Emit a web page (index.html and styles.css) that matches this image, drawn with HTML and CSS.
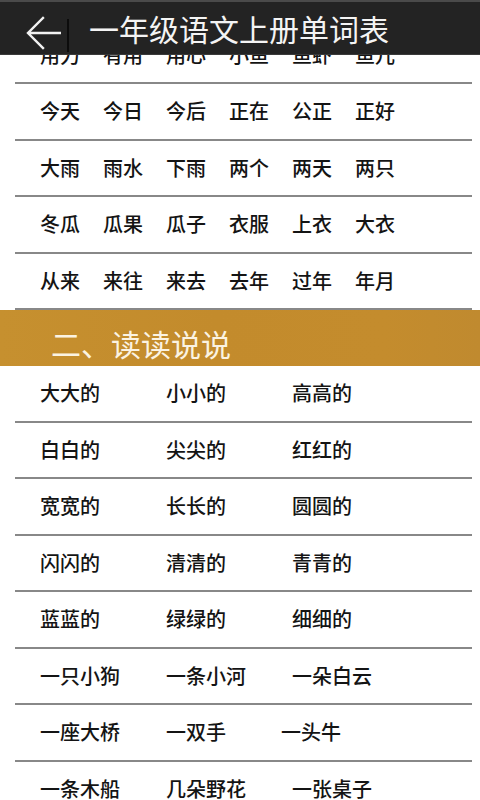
FILE: index.html
```html
<!DOCTYPE html>
<html lang="zh-CN">
<head>
<meta charset="utf-8">
<title>一年级语文上册单词表</title>
<link rel="stylesheet" href="styles.css">
</head>
<body>
<div class="app">
  <header class="topbar">
    <span class="back">
      <svg width="36" height="34" viewBox="0 0 36 34">
        <path d="M35 17 H4 M18 2 L3 17 L18 32" fill="none" stroke="#f2f2f2" stroke-width="2.4" stroke-linecap="square"/>
      </svg>
    </span>
    <span class="divider"></span>
    <h1 class="title">一年级语文上册单词表</h1>
  </header>
  <main class="viewport">
    <div class="scroll">
      <div class="row six"><span>用力</span><span>有用</span><span>用心</span><span>小鱼</span><span>鱼虾</span><span>鱼儿</span></div>
      <div class="row six"><span>今天</span><span>今日</span><span>今后</span><span>正在</span><span>公正</span><span>正好</span></div>
      <div class="row six"><span>大雨</span><span>雨水</span><span>下雨</span><span>两个</span><span>两天</span><span>两只</span></div>
      <div class="row six"><span>冬瓜</span><span>瓜果</span><span>瓜子</span><span>衣服</span><span>上衣</span><span>大衣</span></div>
      <div class="row six"><span>从来</span><span>来往</span><span>来去</span><span>去年</span><span>过年</span><span>年月</span></div>
      <div class="banner"><span>二、读读说说</span></div>
      <div class="row three"><span>大大的</span><span>小小的</span><span>高高的</span></div>
      <div class="row three"><span>白白的</span><span>尖尖的</span><span>红红的</span></div>
      <div class="row three"><span>宽宽的</span><span>长长的</span><span>圆圆的</span></div>
      <div class="row three"><span>闪闪的</span><span>清清的</span><span>青青的</span></div>
      <div class="row three"><span>蓝蓝的</span><span>绿绿的</span><span>细细的</span></div>
      <div class="row three"><span>一只小狗</span><span>一条小河</span><span>一朵白云</span></div>
      <div class="row three"><span>一座大桥</span><span>一双手</span><span class="shift">一头牛</span></div>
      <div class="row three"><span>一条木船</span><span>几朵野花</span><span>一张桌子</span></div>
    </div>
  </main>
</div>
</body>
</html>
```

FILE: styles.css
```css
* { box-sizing: border-box; }
html, body { margin: 0; padding: 0; background: #ffffff; }
body {
  font-family: "Noto Sans CJK SC", "Noto Sans", "Liberation Sans", sans-serif;
  color: #141414;
}
.app {
  width: 480px;
  height: 800px;
  overflow: hidden;
  display: flex;
  flex-direction: column;
}
.topbar {
  flex: 0 0 55px;
  height: 55px;
  background: #232323;
  border-top: 2px solid #4a4a4a;
  border-bottom: 1px solid #3a3a3a;
  display: flex;
  align-items: center;
  position: relative;
  z-index: 2;
}
.back {
  margin-left: 25px;
  width: 36px;
  height: 34px;
  margin-top: 9px;
  display: flex;
}
.divider {
  width: 2px;
  height: 33px;
  background: #0c0c0c;
  margin-left: 6px;
  margin-top: 14px;
}
.title {
  margin: 0 0 0 20px;
  font-size: 30px;
  font-weight: 400;
  color: #f4f4f4;
  line-height: 1;
}
.viewport {
  flex: 1 1 auto;
  overflow: hidden;
}
.scroll {
  margin-top: -27.5px;
}
.row {
  height: 56.5px;
  margin: 0 8px 0 15px;
  border-bottom: 2px solid #888888;
  display: flex;
  align-items: center;
  padding-left: 25px;
  font-size: 20px;
  font-weight: 500;
  line-height: 1;
}
.row.six { gap: 23px; }
.row.three {
  display: grid;
  grid-template-columns: 126px 126px 126px;
  align-items: center;
}
.shift { margin-left: -11px; }
.banner {
  height: 56px;
  background: linear-gradient(90deg, #c6902f 0%, #c38b2c 45%, #c48c2d 80%, #c08a2f 100%);
  display: flex;
  align-items: center;
  padding: 10px 0 0 51px;
  font-size: 30px;
  line-height: 1;
  color: #fbf3e2;
}
```
